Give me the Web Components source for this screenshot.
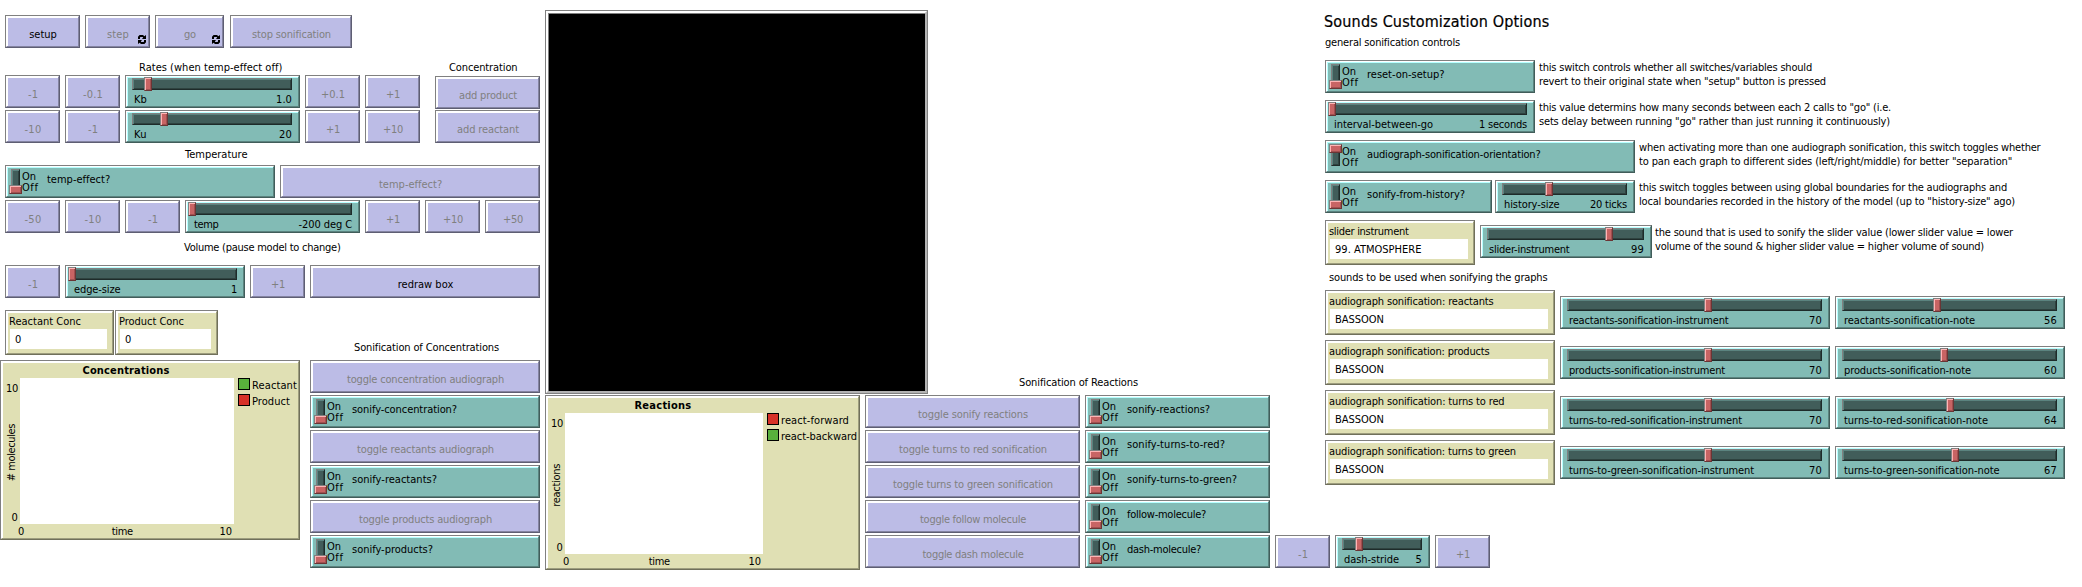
<!DOCTYPE html>
<html lang="en">
<head>
<meta charset="utf-8">
<title>Reaction model</title>
<style>
  html, body { margin: 0; background: #fff; }
  body { width: 2082px; height: 587px; overflow: hidden; font: 11px/14px "DejaVu Sans Condensed", "DejaVu Sans", sans-serif; font-stretch: condensed; color: #000; }
</style>
</head>
<body>
<model-interface></model-interface>
<script>
const define = (tag, css, html, setup) => {
  const t = document.createElement('template');
  t.innerHTML = `<style>*{box-sizing:border-box}${css}</style>${html}`;
  customElements.define(tag, class extends HTMLElement {
    connectedCallback() {
      if (this.shadowRoot) return;
      const root = this.attachShadow({ mode: 'open' });
      root.appendChild(t.content.cloneNode(true));
      if (setup) setup.call(this, root);
    }
  });
};

// A single line of text; "w" gives the advance it is spaced to fill.
define('ui-text', `
  :host{display:inline-block;white-space:pre;flex:none;height:14px;line-height:16px}
  span{display:inline-block}`,
  `<span><slot></slot></span>`,
  function (root) {
    const w = parseFloat(this.getAttribute('w')), s = root.querySelector('span');
    if (!w) return;
    const nat = s.getBoundingClientRect().width;
    s.style.letterSpacing = ((w + 1 - nat) / this.textContent.length) + 'px';
    this.style.width = w + 'px';
  });

// Raised bevel frame shared by every widget.
const FRAME = `
  :host{display:block;flex:none;height:33px;border:1px solid;border-color:#808080 var(--d2) var(--d2) #808080}
  .in{height:100%;border:1px solid;border-color:#fff var(--d1) var(--d1) #fff;background:var(--bg);box-shadow:inset 1px 1px 0 var(--hl)}`;
const size = (el) => { el.style.width = el.getAttribute('width') + 'px'; };
const fill = (root, sel, text, w) => {
  const t = root.querySelector(sel);
  const n = document.createElement('ui-text');
  if (w) n.setAttribute('w', w);
  n.textContent = text;
  t.appendChild(n);
};

define('ui-button', `${FRAME}
  :host{--bg:#bcbce6;--hl:#fff;--d1:#8484a1;--d2:#5e5e73;color:#808080}
  :host([enabled]){color:#000}
  .in{display:flex;justify-content:center;padding-top:10px;position:relative}
  svg{display:none;position:absolute;right:2px;bottom:2px}
  :host([forever]) svg{display:block}`,
  `<div class="in"><div class="t"></div>
   <svg width="8" height="9" viewBox="0 0 8 9"><path id="a" fill="#000" d="M0 4V1.8L1.6 0H5L6.3 1.2L8 0V4H4L5.2 2.6L4.6 2H2.4L2 2.5V4zM8 5V7.2L6.4 9H3L1.7 7.8L0 9V5H4L2.8 6.4L3.4 7H5.6L6 6.5V5z"/></svg></div>`,
  function (root) { size(this); fill(root, '.t', this.getAttribute('label'), this.getAttribute('tw')); });

const KNOB = `border:1px solid;border-color:#808080 #6b3535 #6b3535 #808080;background:#c86464;box-shadow:inset 1px 1px 0 #ffb4b4,inset -1px -1px 0 #a05050`;
const GROOVE = `border:1px solid;border-color:#808080 #1e2b2a #1e2b2a #808080;background:#415d5a;box-shadow:inset 1px 1px 0 #5b837f,inset -1px -1px 0 #2e423f`;
const TEAL = `:host{--bg:#82bbb5;--hl:#b5ffff;--d1:#5b837f;--d2:#415d5a}`;

define('ui-slider', `${FRAME}${TEAL}
  .in{padding:1px 6px 0 5px}
  .groove{height:12px;${GROOVE};position:relative}
  .knob{position:absolute;top:-2px;width:8px;height:14px;${KNOB}}
  .row{display:flex;justify-content:space-between;padding:2px 1px 0 2px}`,
  `<div class="in"><div class="groove"><div class="knob"></div></div><div class="row"><div class="n"></div><div class="v"></div></div></div>`,
  function (root) {
    size(this);
    root.querySelector('.knob').style.left = (this.getAttribute('knob') - 8) + 'px';
    fill(root, '.n', this.getAttribute('label'), this.getAttribute('tw'));
    fill(root, '.v', this.getAttribute('value'), this.getAttribute('vw'));
  });

define('ui-switch', `${FRAME}${TEAL}
  .in{display:flex;padding:2px 0 0 4px}
  .groove{width:9px;height:22px;${GROOVE};position:relative}
  .knob{position:absolute;left:-3px;top:15px;width:13px;height:9px;${KNOB}}
  :host([on]) .knob{top:-1px}
  .states{width:21px;margin:0 4px 0 2px}
  .states ui-text{display:block;height:11px}
  .n{padding:3px 0 0 0}`,
  `<div class="in"><div class="groove"><div class="knob"></div></div>
   <div class="states"><ui-text w="13">On</ui-text><ui-text w="15.3">Off</ui-text></div><div class="n"></div></div>`,
  function (root) { size(this); fill(root, '.n', this.getAttribute('label'), this.getAttribute('tw')); });

const KHAKI = `:host{--bg:#e0e0b4;--hl:#fff;--d1:#9d9d7e;--d2:#70705a}`;
define('ui-monitor', `${FRAME}${KHAKI}
  :host{height:45px}
  .in{padding:2px 5px 0 3px}
  .t{margin-left:-1px}
  .box{background:#fff;height:20px;margin-top:1px;padding:3px 0 0 5px}
  .t ui-text,.box ui-text{display:block}`,
  `<div class="in"><div class="t"></div><div class="box"></div></div>`,
  function (root) {
    size(this);
    fill(root, '.t', this.getAttribute('label'), this.getAttribute('tw'));
    fill(root, '.box', this.getAttribute('value'), this.getAttribute('vw'));
  });

define('ui-plot', `${FRAME}${KHAKI}
  .in{display:grid;grid-template-columns:18px var(--pw) 1fr;grid-template-rows:16px var(--ph) 1fr}
  .title{grid-column:2;text-align:center;font-weight:bold;padding-top:1px;margin-left:-3px}
  .y{grid-area:2/1;display:flex;flex-direction:column;justify-content:space-between;align-items:flex-end;padding:3px 3px 0 0}
  .ylab{writing-mode:vertical-rl;transform:rotate(180deg);align-self:flex-start;line-height:14px;margin-left:3px}
  .area{grid-area:2/2;background:#fff}
  .x{grid-area:3/2;display:flex;justify-content:space-between;margin:0 3px 0 -2px}
  .legend{grid-area:2/3;padding-left:4px}`,
  `<div class="in"><div class="title"></div>
   <div class="y"><ui-text w="11">10</ui-text><div class="ylab"></div><ui-text w="5.5">0</ui-text></div>
   <div class="area"></div>
   <div class="x"><ui-text w="6">0</ui-text><ui-text w="20">time</ui-text><ui-text w="11.5">10</ui-text></div>
   <div class="legend"><slot></slot></div></div>`,
  function (root) {
    size(this);
    const a = (n) => this.getAttribute(n);
    this.style.height = a('height') + 'px';
    this.style.setProperty('--pw', a('pw') + 'px');
    this.style.setProperty('--ph', a('ph') + 'px');
    fill(root, '.title', a('label'), a('tw'));
    root.querySelector('.ylab').textContent = a('ylab');
    root.querySelector('.ylab').style.letterSpacing = a('ysp') + 'px';
  });

define('ui-pen', `
  :host{display:flex;height:16px}
  i{width:12px;height:12px;border:1px solid #000;background:var(--c);margin-right:2px;flex:none}`,
  `<i></i><div class="t"></div>`,
  function (root) {
    this.style.setProperty('--c', this.getAttribute('color'));
    fill(root, '.t', this.getAttribute('label'), this.getAttribute('tw'));
  });

define('ui-view', `
  :host{display:block;width:383px;height:384px;border:1px solid #808080}
  .a{height:100%;border:2px solid;border-color:#fff #b2b2b2 #b2b2b2 #fff}
  .b{height:100%;background:#000;border:solid #808080;border-width:1px 0 0 1px}`,
  `<div class="a"><div class="b"></div></div>`);

define('model-interface', `
  :host{display:flex;width:2082px;height:587px;align-items:flex-start}
  .row{display:flex;gap:5px}
  .col{display:flex;flex-direction:column;gap:2px}
  .left{width:545px;flex:none;padding:15px 0 0 5px}
  .mid{width:780px;flex:none;padding-top:10px}
  .right{padding:13px 0 0 0}
  .note{margin-left:4px;display:flex;flex-direction:column}
  .h{font-size:16px}
  .h ui-text{line-height:18px;-webkit-text-stroke:.2px #000;margin-left:-1px}
  .line{height:14px;display:flex}
  .lower{display:flex;margin-left:-5px}
`, `
<div class="left">
  <div class="row">
    <ui-button width="75" label="setup" tw="26.5" enabled></ui-button>
    <ui-button width="65" label="step" tw="21" forever></ui-button>
    <ui-button width="69" label="go" tw="11" forever></ui-button>
    <ui-button width="122" label="stop sonification" tw="78" style="margin-left:1px"></ui-button>
  </div>
  <div class="line" style="margin:12px 0 1px 134px"><ui-text w="142">Rates (when temp-effect off)</ui-text><ui-text w="67.5" style="margin-left:168px">Concentration</ui-text></div>
  <div class="row">
    <div class="col">
      <div class="row"><ui-button width="55" label="-1" tw="9"></ui-button><ui-button width="55" label="-0.1" tw="19"></ui-button><ui-slider width="175" label="Kb" tw="12" value="1.0" vw="15" knob="19"></ui-slider><ui-button width="55" label="+0.1" tw="23"></ui-button><ui-button width="55" label="+1" tw="13"></ui-button></div>
      <div class="row"><ui-button width="55" label="-10" tw="16"></ui-button><ui-button width="55" label="-1" tw="9"></ui-button><ui-slider width="175" label="Ku" tw="12" value="20" vw="12" knob="35"></ui-slider><ui-button width="55" label="+1" tw="13"></ui-button><ui-button width="55" label="+10" tw="19"></ui-button></div>
    </div>
    <div class="col" style="gap:1px;margin:1px 0 0 10px"><ui-button width="105" label="add product" tw="57"></ui-button><ui-button width="105" label="add reactant" tw="61"></ui-button></div>
  </div>
  <div class="line" style="margin:4px 0 4px 180px"><ui-text w="61.5">Temperature</ui-text></div>
  <div class="row"><ui-switch width="270" label="temp-effect?" tw="62"></ui-switch><ui-button width="260" label="temp-effect?" tw="62"></ui-button></div>
  <div class="row" style="margin-top:2px"><ui-button width="55" label="-50" tw="16"></ui-button><ui-button width="55" label="-10" tw="16"></ui-button><ui-button width="55" label="-1" tw="9"></ui-button><ui-slider width="175" label="temp" tw="23.5" value="-200 deg C" vw="52.5" knob="3"></ui-slider><ui-button width="55" label="+1" tw="13"></ui-button><ui-button width="55" label="+10" tw="19"></ui-button><ui-button width="55" label="+50" tw="19"></ui-button></div>
  <div class="line" style="margin:7px 0 11px 179px"><ui-text w="155.5">Volume (pause model to change)</ui-text></div>
  <div class="row"><ui-button width="55" label="-1" tw="9"></ui-button><ui-slider width="180" label="edge-size" tw="45.5" value="1" vw="5" knob="3"></ui-slider><ui-button width="55" label="+1" tw="13"></ui-button><ui-button width="230" label="redraw box" tw="54.5" enabled></ui-button></div>
  <div class="lower" style="margin-top:12px">
    <div style="width:310px">
      <div class="row" style="gap:1px;margin-left:5px"><ui-monitor width="109" label="Reactant Conc" tw="71" value="0" vw="5.5"></ui-monitor><ui-monitor width="103" label="Product Conc" tw="64" value="0" vw="5.5"></ui-monitor></div>
      <ui-plot style="margin-top:5px" width="300" height="180" pw="214" ph="146" label="Concentrations" tw="86" ylab="# molecules" ysp="-0.4">
        <ui-pen color="#59b03c" label="Reactant" tw="44"></ui-pen><ui-pen color="#d73229" label="Product" tw="37"></ui-pen>
      </ui-plot>
    </div>
    <div class="col">
      <div class="line" style="margin:30px 0 4px 44px"><ui-text w="144">Sonification of Concentrations</ui-text></div>
      <ui-button width="230" label="toggle concentration audiograph" tw="156"></ui-button>
      <ui-switch width="230" label="sonify-concentration?" tw="104"></ui-switch>
      <ui-button width="230" label="toggle reactants audiograph" tw="136"></ui-button>
      <ui-switch width="230" label="sonify-reactants?" tw="84"></ui-switch>
      <ui-button width="230" label="toggle products audiograph" tw="132"></ui-button>
      <ui-switch width="230" label="sonify-products?" tw="80"></ui-switch>
    </div>
  </div>
</div>

<div class="mid">
  <div class="row" style="align-items:flex-end;height:384px">
    <ui-view></ui-view>
    <div class="line" style="margin:0 0 5px 86px"><ui-text w="118">Sonification of Reactions</ui-text></div>
  </div>
  <div class="row" style="margin-top:1px;align-items:flex-start">
    <ui-plot width="315" height="175" pw="198" ph="141" label="Reactions" tw="56" ylab="reactions" ysp="-0.3">
      <ui-pen color="#d73229" label="react-forward" tw="67"></ui-pen><ui-pen color="#59b03c" label="react-backward" tw="75"></ui-pen>
    </ui-plot>
    <div class="col">
      <ui-button width="215" label="toggle sonify reactions" tw="109"></ui-button>
      <ui-button width="215" label="toggle turns to red sonification" tw="147"></ui-button>
      <ui-button width="215" label="toggle turns to green sonification" tw="159"></ui-button>
      <ui-button width="215" label="toggle follow molecule" tw="105"></ui-button>
      <ui-button width="215" label="toggle dash molecule" tw="100"></ui-button>
    </div>
    <div class="col">
      <ui-switch width="185" label="sonify-reactions?" tw="82"></ui-switch>
      <ui-switch width="185" label="sonify-turns-to-red?" tw="97"></ui-switch>
      <ui-switch width="185" label="sonify-turns-to-green?" tw="109"></ui-switch>
      <ui-switch width="185" label="follow-molecule?" tw="78"></ui-switch>
      <ui-switch width="185" label="dash-molecule?" tw="73"></ui-switch>
    </div>
    <div class="row" style="align-self:flex-end;margin-bottom:2px">
      <ui-button width="55" label="-1" tw="9"></ui-button>
      <ui-slider width="95" label="dash-stride" tw="54" value="5" vw="5.5" knob="20"></ui-slider>
      <ui-button width="55" label="+1" tw="13"></ui-button>
    </div>
  </div>
</div>

<div class="right">
  <div class="line h"><ui-text w="224.5">Sounds Customization Options</ui-text></div>
  <div class="line" style="margin:8px 0 11px"><ui-text w="134">general sonification controls</ui-text></div>
  <div class="col" style="gap:7px">
    <div class="row" style="gap:0"><ui-switch width="210" label="reset-on-setup?" tw="76.5"></ui-switch>
      <div class="note"><ui-text w="272">this switch controls whether all switches/variables should</ui-text><ui-text w="286">revert to their original state when "setup" button is pressed</ui-text></div></div>
    <div class="row" style="gap:0"><ui-slider width="210" label="interval-between-go" tw="98" value="1 seconds" vw="47" knob="3"></ui-slider>
      <div class="note"><ui-text w="351">this value determins how many seconds between each 2 calls to "go" (i.e.</ui-text><ui-text w="350">sets delay between running "go" rather than just running it continuously)</ui-text></div></div>
    <div class="row" style="gap:0"><ui-switch on width="310" label="audiograph-sonification-orientation?" tw="172.5"></ui-switch>
      <div class="note"><ui-text w="400.5">when activating more than one audiograph sonification, this switch toggles whether</ui-text><ui-text w="372">to pan each graph to different sides (left/right/middle) for better "separation"</ui-text></div></div>
    <div class="row" style="gap:0"><ui-switch width="167" label="sonify-from-history?" tw="97"></ui-switch><ui-slider style="margin-left:3px" width="140" label="history-size" tw="54.5" value="20 ticks" vw="36" knob="50"></ui-slider>
      <div class="note"><ui-text w="367">this switch toggles between using global boundaries for the audiographs and</ui-text><ui-text w="375">local boundaries recorded in the history of the model (up to "history-size" ago)</ui-text></div></div>
    <div class="row" style="gap:0"><ui-monitor width="150" label="slider instrument" tw="78.5" value="99. ATMOSPHERE" vw="85.5"></ui-monitor><ui-slider style="margin:5px 0 0 5px" width="172" label="slider-instrument" tw="79.5" value="99" vw="12" knob="125"></ui-slider>
      <div class="note" style="margin:5px 0 0 3px"><ui-text w="357">the sound that is used to sonify the slider value (lower slider value = lower</ui-text><ui-text w="328">volume of the sound &amp; higher slider value = higher volume of sound)</ui-text></div></div>
  </div>
  <div class="line" style="margin:5px 0 6px 4px"><ui-text w="217.5">sounds to be used when sonifying the graphs</ui-text></div>
  <div class="col" style="gap:5px">
    <div class="row" style="align-items:center"><ui-monitor width="230" label="audiograph sonification: reactants" tw="163.5" value="BASSOON" vw="48"></ui-monitor><ui-slider width="270" label="reactants-sonification-instrument" tw="158.5" value="70" vw="12" knob="144"></ui-slider><ui-slider width="230" label="reactants-sonification-note" tw="130" value="56" vw="12" knob="98"></ui-slider></div>
    <div class="row" style="align-items:center"><ui-monitor width="230" label="audiograph sonification: products" tw="159.5" value="BASSOON" vw="48"></ui-monitor><ui-slider width="270" label="products-sonification-instrument" tw="155" value="70" vw="12" knob="144"></ui-slider><ui-slider width="230" label="products-sonification-note" tw="126" value="60" vw="12" knob="105"></ui-slider></div>
    <div class="row" style="align-items:center"><ui-monitor width="230" label="audiograph sonification: turns to red" tw="174.5" value="BASSOON" vw="48"></ui-monitor><ui-slider width="270" label="turns-to-red-sonification-instrument" tw="172" value="70" vw="12" knob="144"></ui-slider><ui-slider width="230" label="turns-to-red-sonification-note" tw="143" value="64" vw="12" knob="111"></ui-slider></div>
    <div class="row" style="align-items:center"><ui-monitor width="230" label="audiograph sonification: turns to green" tw="186" value="BASSOON" vw="48"></ui-monitor><ui-slider width="270" label="turns-to-green-sonification-instrument" tw="184" value="70" vw="12" knob="144"></ui-slider><ui-slider width="230" label="turns-to-green-sonification-note" tw="154.5" value="67" vw="12" knob="116"></ui-slider></div>
  </div>
</div>`);
</script>
</body>
</html>
